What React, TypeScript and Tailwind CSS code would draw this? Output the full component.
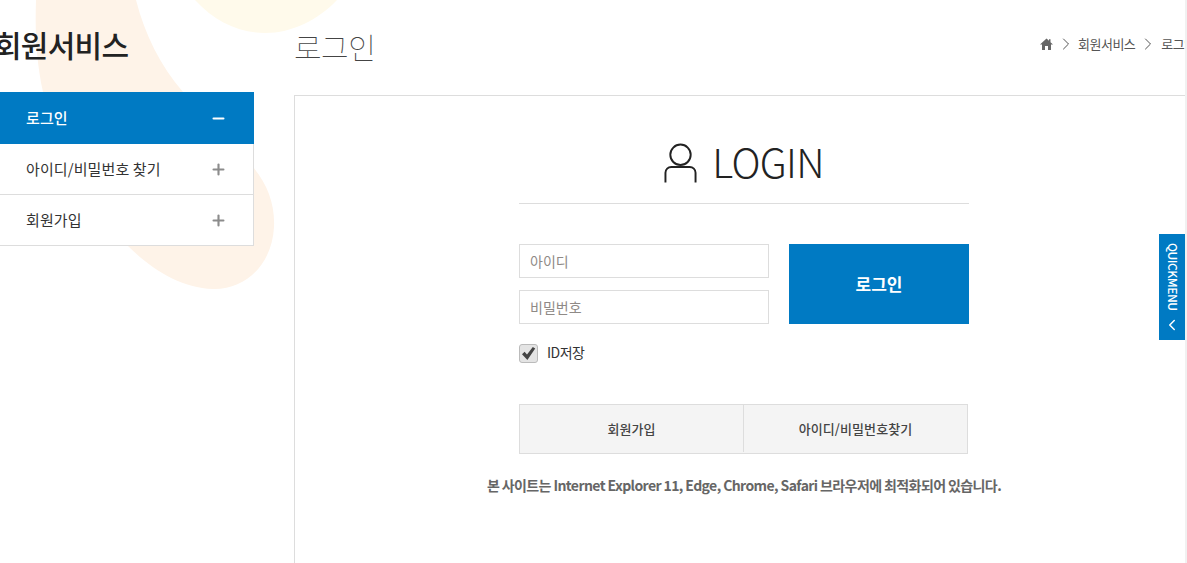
import React from "react";
import { ChevronRight, ChevronLeft, Minus, Plus } from "lucide-react";

const font = "[font-family:'Noto_Sans_CJK_KR','Noto_Sans',sans-serif]";

function MenuItem({ label, active }: { label: string; active?: boolean }) {
  return (
    <div
      className={
        active
          ? "flex h-[52px] items-center justify-between bg-[#007ac3] pl-[26px] pr-[27px] text-white"
          : "flex h-[51px] items-center justify-between border-b border-r border-[#dddddd] bg-white pl-[26px] pr-[26px] text-[#333333]"
      }
    >
      <span className={`mb-[2px] text-[15px] leading-none tracking-[0.1px] ${active ? "font-medium" : ""}`}>{label}</span>
      {active ? (
        <Minus size={17} strokeWidth={3} className="text-white" />
      ) : (
        <Plus size={17} strokeWidth={3} className="text-[#8c8c8c]" />
      )}
    </div>
  );
}

export default function App() {
  return (
    <div className={`relative flex h-[563px] w-[1187px] overflow-hidden bg-white ${font}`}>
      <svg className="absolute left-0 top-0" width="400" height="300" viewBox="0 0 400 300" aria-hidden="true">
        <path
          d="M136 0 C145 35 160 65 183 92 C205 118 235 145 253 167 C268 185 275 205 274 227 C272 265 245 290 213 289 C180 288 150 268 128 246 C95 210 60 160 43 92 C36 60 35 30 36 0 Z"
          fill="#fef3e8"
        />
        <path d="M195 0 C215 22 240 33 265 33 C292 33 318 20 337 0 Z" fill="#fffaeb" />
      </svg>

      <aside className="relative z-10 w-[254px] shrink-0">
        <h2 className="-ml-[6px] mt-[24px] h-[68px] whitespace-nowrap text-[30px] font-medium leading-[40px] tracking-[-0.75px] text-[#222222]">
          회원서비스
        </h2>
        <MenuItem label="로그인" active />
        <MenuItem label="아이디/비밀번호 찾기" />
        <MenuItem label="회원가입" />
      </aside>

      <main className="relative z-10 ml-[40px] flex w-[1000px] shrink-0 flex-col">
        <header className="flex h-[95px] items-start justify-between">
          <h1 className="mt-[24px] text-[30px] font-thin leading-[44px] tracking-[-0.5px] text-[#444444]">로그인</h1>
          <nav className="mr-[107px] mt-[34px] flex w-[147px] items-center whitespace-nowrap text-[13px] leading-[18px] text-[#555555]">
            <svg width="13" height="12" viewBox="0 0 13 12" fill="#666666" className="shrink-0">
              <path d="M6.5 0.5 L9 2.8 V1.2 H10.5 V4.2 L13 6.5 H11 V12 H8 V8 H5 V12 H2 V6.5 H0 Z" />
            </svg>
            <ChevronRight size={20} strokeWidth={1.1} className="mx-[2.5px] shrink-0 text-[#444444]" />
            <span className="tracking-[-0.5px]">회원서비스</span>
            <ChevronRight size={20} strokeWidth={1.1} className="mx-[3px] shrink-0 text-[#444444]" />
            <span className="tracking-[-0.5px]">로그인</span>
          </nav>
        </header>

        <section className="flex h-[468px] flex-col items-center border-l border-t border-[#dddddd] bg-white pr-[101px]">
          <div className="mt-[40px] flex h-[68px] w-[450px] items-start justify-center border-b border-[#dddddd]">
            <svg width="33" height="42" viewBox="0 0 34 42" fill="none" stroke="#222222" strokeWidth="2" className="mr-[15px] mt-[7px]">
              <circle cx="17" cy="11.5" r="10.5" />
              <path d="M1.5 40 V30 a6 6 0 0 1 6 -6 H26.5 a6 6 0 0 1 6 6 V40" />
            </svg>
            <span className="-mt-[3px] text-[40px] font-light leading-[56px] tracking-[-0.7px] text-[#222222]">LOGIN</span>
          </div>

          <form className="mt-[40px] flex w-[450px] flex-col">
            <div className="flex justify-between">
              <div className="flex w-[250px] flex-col gap-[12px]">
                <div className="flex h-[34px] items-center border border-[#dddddd] pl-[10px] text-[14px] text-[#8f8a86]">아이디</div>
                <div className="flex h-[34px] items-center border border-[#dddddd] pl-[10px] text-[14px] text-[#8f8a86]">비밀번호</div>
              </div>
              <button type="button" className="h-[80px] w-[180px] bg-[#007ac3] text-[17px] font-bold text-white">
                로그인
              </button>
            </div>
            <div className="mt-[19px] flex h-[20px] items-center">
              <span className="flex h-[19px] w-[19px] items-center justify-center rounded-[3px] border border-[#bbbbbb] bg-[#e4e4e4]">
                <svg width="15" height="15" viewBox="0 0 15 15" fill="#444444">
                  <path d="M1 8.2 L3.6 5.8 L6 8.4 L11.8 1 L14.2 2.6 L6.4 14 Z" />
                </svg>
              </span>
              <span className="mb-[1px] ml-[9px] text-[14px] tracking-[-0.5px] text-[#333333]">ID저장</span>
            </div>
          </form>

          <div className="mt-[41px] w-[450px] pr-[1px]">
            <div className="flex h-[50px] border border-[#dddddd] bg-[#f4f4f4] pb-[1px] text-[13px] font-medium tracking-[0.1px] text-[#444444]">
              <div className="flex w-[224px] items-center justify-center border-r border-[#dddddd]">회원가입</div>
              <div className="flex flex-1 items-center justify-center">아이디/비밀번호찾기</div>
            </div>
          </div>

          <p className="mt-[21px] whitespace-nowrap text-[14px] font-bold leading-[20px] tracking-[-0.6px] text-[#666666]">
            본 사이트는 Internet Explorer 11, Edge, Chrome, Safari 브라우저에 최적화되어 있습니다.
          </p>
        </section>
      </main>

      <div className="absolute right-[2px] top-[234px] z-20 flex h-[106px] w-[26px] flex-col items-center bg-[#007ac3] pt-[9px] text-white">
        <span className="translate-x-[1px] text-[12px] font-medium leading-none tracking-[-0.5px] [writing-mode:vertical-rl]">QUICKMENU</span>
        <ChevronLeft size={18} strokeWidth={2} className="absolute bottom-[6px]" />
      </div>
      <div className="absolute right-0 top-0 z-20 h-full w-[2px] bg-[#f1f1f1]" />
    </div>
  );
}
